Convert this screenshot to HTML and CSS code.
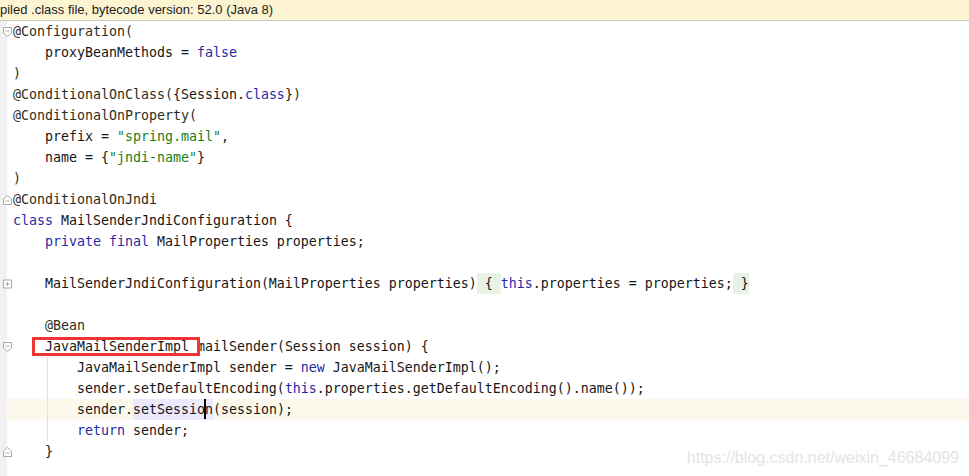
FILE: index.html
```html
<!DOCTYPE html>
<html lang="en">
<head>
    <meta charset="UTF-8">
    <meta name="viewport" content="width=device-width, initial-scale=1.0">
    <title>MailSenderJndiConfiguration.class</title>
    <link rel="stylesheet" href="styles.css">
</head>
<body>
    <div class="banner">piled .class file, bytecode version: 52.0 (Java 8)</div>

    <div class="editor">
        <div class="line"><span class="gutter"><svg class="fold" viewBox="0 0 9 10"><path d="M0.5 0.5H8.5V6L4.5 9.5L0.5 6Z"/><path d="M2.5 4H6.5"/></svg></span><span class="code"><span class="ann">@Configuration(</span></span></div>
        <div class="line"><span class="gutter"></span><span class="code">    proxyBeanMethods = <span class="kw">false</span></span></div>
        <div class="line"><span class="gutter"></span><span class="code"><span class="ann">)</span></span></div>
        <div class="line"><span class="gutter"></span><span class="code"><span class="ann">@ConditionalOnClass(</span>{Session.<span class="kw">class</span>}<span class="ann">)</span></span></div>
        <div class="line"><span class="gutter"></span><span class="code"><span class="ann">@ConditionalOnProperty(</span></span></div>
        <div class="line"><span class="gutter"></span><span class="code">    prefix = <span class="str">"spring.mail"</span>,</span></div>
        <div class="line"><span class="gutter"></span><span class="code">    name = {<span class="str">"jndi-name"</span>}</span></div>
        <div class="line"><span class="gutter"></span><span class="code"><span class="ann">)</span></span></div>
        <div class="line"><span class="gutter"><svg class="fold" viewBox="0 0 9 10"><path d="M0.5 9.5H8.5V4L4.5 0.5L0.5 4Z"/><path d="M2.5 6H6.5"/></svg></span><span class="code"><span class="ann">@ConditionalOnJndi</span></span></div>
        <div class="line"><span class="gutter"></span><span class="code"><span class="kw">class</span> MailSenderJndiConfiguration {</span></div>
        <div class="line"><span class="gutter"></span><span class="code">    <span class="kw">private final</span> MailProperties properties;</span></div>
        <div class="line"><span class="gutter"></span><span class="code"> </span></div>
        <div class="line"><span class="gutter"><svg class="fold" viewBox="0 0 9 9"><path d="M0.5 0.5H8.5V8.5H0.5Z"/><path d="M2.5 4.5H6.5M4.5 2.5V6.5"/></svg></span><span class="code">    MailSenderJndiConfiguration(MailProperties properties)<span class="folded"> { </span><span class="kw">this</span>.properties = properties;<span class="folded"> }</span></span></div>
        <div class="line"><span class="gutter"></span><span class="code"> </span></div>
        <div class="line"><span class="gutter"></span><span class="code">    <span class="ann">@Bean</span></span></div>
        <div class="line"><span class="gutter"><svg class="fold" viewBox="0 0 9 10"><path d="M0.5 0.5H8.5V6L4.5 9.5L0.5 6Z"/><path d="M2.5 4H6.5"/></svg></span><span class="code">    <span class="boxed">JavaMailSenderImpl </span>mailSender(Session session) {</span></div>
        <div class="line guide"><span class="gutter"></span><span class="code">        JavaMailSenderImpl sender = <span class="kw">new</span> JavaMailSenderImpl();</span></div>
        <div class="line guide"><span class="gutter"></span><span class="code">        sender.setDefaultEncoding(<span class="kw">this</span>.properties.getDefaultEncoding().name());</span></div>
        <div class="line guide current"><span class="gutter"></span><span class="code">        sender.<span class="usage">setSessio<span class="caret"></span>n</span>(session);</span></div>
        <div class="line guide"><span class="gutter"></span><span class="code">        <span class="kw">return</span> sender;</span></div>
        <div class="line"><span class="gutter"><svg class="fold" viewBox="0 0 9 10"><path d="M0.5 9.5H8.5V4L4.5 0.5L0.5 4Z"/><path d="M2.5 6H6.5"/></svg></span><span class="code">    }</span></div>
    </div>

    <div class="watermark">https://blog.csdn.net/weixin_46684099</div>
</body>
</html>
```

FILE: styles.css
```css
body {
    margin: 0;
    width: 969px;
    height: 476px;
    overflow: hidden;
    background-color: #fff;
    position: relative;
}
.banner {
    height: 20px;
    line-height: 19px;
    background-color: #fdf5d2;
    border-bottom: 1px solid #c9c9c9;
    font-family: "Liberation Sans", Arial, sans-serif;
    font-size: 13px;
    color: #1c1c1c;
    white-space: nowrap;
}
.editor {
    height: 455px;
    background: linear-gradient(to right, #f1f1f1 7px, #fff 7px);
    font-family: "DejaVu Sans Mono", monospace;
    font-size: 13.29px;
    color: #161616;
}
.line {
    display: flex;
    height: 21px;
    line-height: 21px;
}
.gutter {
    flex: none;
    width: 13px;
    display: flex;
    align-items: center;
}
.fold {
    width: 9px;
    height: 10px;
    margin-left: 3px;
    fill: #fff;
    stroke: #a9a9a9;
    stroke-width: 1;
}
.code {
    white-space: pre;
}
.line.guide {
    background: linear-gradient(to right, transparent 47px, #e1e1e1 47px, #e1e1e1 48px, transparent 48px);
}
.line.guide.current {
    background:
        linear-gradient(to right, transparent 47px, #e1e1e1 47px, #e1e1e1 48px, transparent 48px),
        linear-gradient(to right, transparent 7px, #fcf9ec 7px);
}
.ann {
    color: #2e2e1c;
}
.kw {
    color: #1f2aa8;
}
.str {
    color: #1a7d1a;
}
.folded {
    display: inline-block;
    height: 21px;
    vertical-align: top;
    background-color: #e9f3e5;
}
.usage {
    display: inline-block;
    height: 21px;
    vertical-align: top;
    background-color: #ebe9fb;
}
.caret {
    display: inline-block;
    width: 0;
    height: 20px;
    margin: 0 -1px;
    vertical-align: top;
    border-left: 2px solid #000;
}
.boxed {
    position: relative;
}
.boxed::after {
    content: "";
    position: absolute;
    top: -2px;
    bottom: -2px;
    left: -13px;
    right: -3px;
    border: 3px solid #ee3333;
}
.watermark {
    position: absolute;
    right: 10px;
    bottom: 9px;
    font-family: "Liberation Sans", Arial, sans-serif;
    font-size: 16px;
    color: #e4e4e4;
}
```
